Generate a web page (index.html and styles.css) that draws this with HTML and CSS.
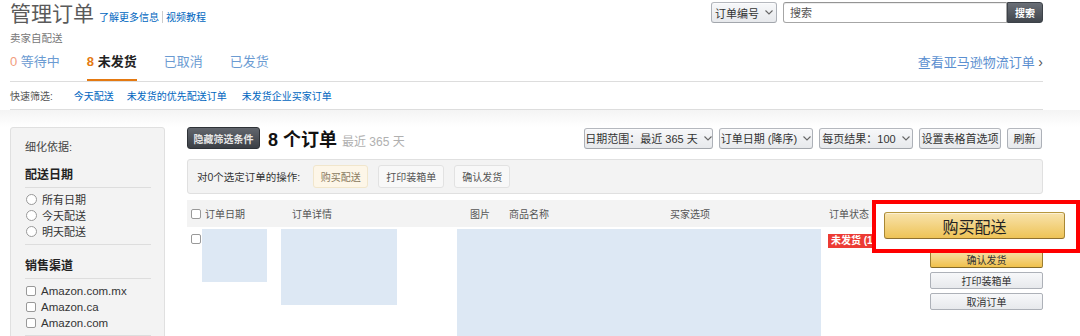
FILE: index.html
```html
<!DOCTYPE html>
<html lang="zh-CN">
<head>
    <meta charset="UTF-8">
    <title>管理订单</title>
    <link rel="stylesheet" href="styles.css">
</head>
<body>

<div class="page">
    <!-- 标题和搜索 -->
    <div class="top">
        <div class="title-wrap">
            <h1>管理订单</h1>
            <div class="help-links">
                <a href="#">了解更多信息</a><span class="sep"></span><a href="#">视频教程</a>
            </div>
        </div>
        <div class="search">
            <button class="btn select-btn">订单编号 <svg class="chev" width="8" height="5" viewBox="0 0 8 5"><polyline points="0.5,0.5 4,4 7.5,0.5" fill="none" stroke="#666" stroke-width="1.1"/></svg></button>
            <input class="search-input" type="text" placeholder="搜索">
            <button class="search-btn">搜索</button>
        </div>
    </div>

    <div class="seller-type">卖家自配送</div>

    <div class="tabs">
        <a class="tab" href="#"><span class="num-pending">0</span> 等待中</a>
        <a class="tab active" href="#"><span class="num-active">8</span> 未发货</a>
        <a class="tab" href="#">已取消</a>
        <a class="tab" href="#">已发货</a>
        <a class="tab fba-link" href="#">查看亚马逊物流订单 <span class="arrow">›</span></a>
    </div>

    <div class="quick-filter">
        <span class="qf-label">快速筛选:</span>
        <a href="#">今天配送</a>
        <a href="#">未发货的优先配送订单</a>
        <a href="#">未发货企业买家订单</a>
    </div>
    <div class="fade"></div>

    <div class="content">
        <!-- 左侧筛选 -->
        <div class="sidebar">
            <div class="refine">细化依据:</div>

            <div class="side-title">配送日期</div>
            <div class="side-list">
                <label class="opt"><span class="radio"></span>所有日期</label>
                <label class="opt"><span class="radio"></span>今天配送</label>
                <label class="opt"><span class="radio"></span>明天配送</label>
            </div>

            <div class="side-title">销售渠道</div>
            <div class="side-list">
                <label class="opt latin"><span class="check"></span>Amazon.com.mx</label>
                <label class="opt latin"><span class="check"></span>Amazon.ca</label>
                <label class="opt latin"><span class="check"></span>Amazon.com</label>
            </div>
        </div>

        <!-- 订单列表 -->
        <div class="main">
            <div class="toolbar">
                <button class="dark-btn">隐藏筛选条件</button>
                <span class="count">8 个订单</span>
                <span class="range">最近 365 天</span>
                <div class="controls">
                    <button class="btn w-range">日期范围：最近 365 天 <svg class="chev" width="8" height="5" viewBox="0 0 8 5"><polyline points="0.5,0.5 4,4 7.5,0.5" fill="none" stroke="#666" stroke-width="1.1"/></svg></button>
                    <button class="btn w-sort">订单日期 (降序) <svg class="chev" width="8" height="5" viewBox="0 0 8 5"><polyline points="0.5,0.5 4,4 7.5,0.5" fill="none" stroke="#666" stroke-width="1.1"/></svg></button>
                    <button class="btn w-page">每页结果：100 <svg class="chev" width="8" height="5" viewBox="0 0 8 5"><polyline points="0.5,0.5 4,4 7.5,0.5" fill="none" stroke="#666" stroke-width="1.1"/></svg></button>
                    <button class="btn w-pref">设置表格首选项</button>
                    <button class="btn w-refresh">刷新</button>
                </div>
            </div>

            <div class="action-bar">
                <span class="action-label">对0个选定订单的操作:</span>
                <button class="light-btn buy">购买配送</button>
                <button class="light-btn">打印装箱单</button>
                <button class="light-btn">确认发货</button>
            </div>

            <div class="orders">
                <div class="thead">
                    <span class="check"></span>
                    <span class="th c-date">订单日期</span>
                    <span class="th c-detail">订单详情</span>
                    <span class="th c-img">图片</span>
                    <span class="th c-name">商品名称</span>
                    <span class="th c-buyer">买家选项</span>
                    <span class="th c-status">订单状态</span>
                </div>

                <div class="row">
                    <span class="check row-check"></span>
                    <div class="blur b-date"></div>
                    <div class="blur b-detail"></div>
                    <div class="blur b-product"></div>
                    <div class="status"><span class="badge">未发货 (1)</span></div>
                    <div class="row-actions">
                        <button class="small-btn yellow">确认发货</button>
                        <button class="small-btn">打印装箱单</button>
                        <button class="small-btn">取消订单</button>
                    </div>
                </div>

                <!-- 标注框 -->
                <div class="callout">
                    <button class="big-buy">购买配送</button>
                </div>
            </div>
        </div>
    </div>
</div>

</body>
</html>
```

FILE: styles.css
```css
body {
    margin: 0;
    background: #fff;
    font-family: "Liberation Sans", "Noto Sans CJK SC", sans-serif;
    font-size: 12px;
    color: #333;
    overflow: hidden;
}
a {
    text-decoration: none;
}
button {
    font-family: inherit;
}
.page {
    width: 1033px;
    padding-left: 10px;
}

/* 顶部 */
.top {
    display: flex;
    justify-content: space-between;
    height: 30px;
}
.title-wrap {
    display: flex;
    align-items: baseline;
}
h1 {
    margin: 0;
    font-size: 21px;
    line-height: 28px;
    font-weight: normal;
    color: #5a5a5a;
}
.help-links {
    margin-left: 5px;
    font-size: 10px;
}
.help-links a {
    color: #0066c0;
}
.sep {
    display: inline-block;
    width: 1px;
    height: 12px;
    background: #ccc;
    margin: 0 3px -2px;
}
.search {
    display: flex;
    margin-top: 2px;
    height: 21px;
}
.btn {
    display: inline-flex;
    align-items: center;
    justify-content: center;
    gap: 6px;
    height: 100%;
    padding: 0;
    font-size: 11px;
    color: #333;
    background: linear-gradient(#f7f8fa, #e7e9ec);
    border: 1px solid #adb1b8;
    border-color: #b5b8be #adb1b8 #a2a6ac;
    border-radius: 3px;
    box-shadow: 0 1px 0 rgba(255, 255, 255, 0.6) inset;
}
.chev {
    display: block;
}
.select-btn {
    width: 66px;
    margin-right: 6px;
}
.search-input {
    width: 224px;
    box-sizing: border-box;
    height: 21px;
    margin: 0;
    padding: 0 6px;
    border: 1px solid #a6a6a6;
    border-top-color: #949494;
    border-radius: 3px 0 0 3px;
    box-shadow: 0 1px 0 rgba(0, 0, 0, 0.07) inset;
    font-family: inherit;
    font-size: 11px;
}
.search-input::placeholder {
    color: #555;
}
.search-btn {
    width: 36px;
    height: 21px;
    padding: 0;
    border: 1px solid #3d4249;
    border-radius: 0 3px 3px 0;
    background: linear-gradient(#6a6f77, #41464d);
    color: #fff;
    font-size: 10px;
    font-weight: bold;
}

.seller-type {
    font-size: 10.5px;
    line-height: 16px;
    color: #777;
}

/* 标签页 */
.tabs {
    display: flex;
    gap: 27px;
    border-bottom: 1px solid #ddd;
}
.tab {
    padding: 6px 0;
    line-height: 20px;
    font-size: 13px;
    color: #6b9bd2;
    border-bottom: 2px solid transparent;
}
.num-pending {
    color: #f29d7e;
}
.tab.active {
    color: #222;
    font-weight: bold;
    border-bottom-color: #e47911;
}
.num-active {
    color: #e47911;
}
.fba-link {
    margin-left: auto;
    font-size: 13px;
    color: #5b8fd0;
}
.arrow {
    color: #555;
    font-size: 14px;
}

.quick-filter {
    display: flex;
    align-items: center;
    gap: 13px;
    height: 27px;
    font-size: 10px;
    border-bottom: 1px solid #ddd;
}
.qf-label {
    color: #555;
    margin-right: 8px;
}
.quick-filter a {
    color: #0066c0;
}
.quick-filter a:last-child {
    margin-left: 2px;
}
.fade {
    height: 17px;
    margin-left: -10px;
    width: 1080px;
    background: linear-gradient(#f4f4f4, #fff);
}

/* 内容区 */
.content {
    display: flex;
    gap: 22px;
}
.sidebar {
    width: 126px;
    min-height: 240px;
    padding: 12px 13px 0 14px;
    background: #f3f3f3;
    border: 1px solid #e0e0e0;
    border-radius: 3px;
    flex-shrink: 0;
}
.refine {
    font-size: 11px;
    line-height: 14px;
    color: #444;
}
.side-title {
    margin-top: 14px;
    padding-bottom: 5px;
    line-height: 14px;
    font-size: 12px;
    font-weight: bold;
    color: #222;
    border-bottom: 1px solid #ddd;
}
.side-title + .side-list {
    padding: 3px 0 5px;
}
.side-list {
    border-bottom: 1px solid #ddd;
}
.side-list:last-child {
    padding: 4px 0 4px;
}
.opt {
    display: flex;
    align-items: center;
    height: 16px;
    font-size: 11px;
    color: #333;
}
.opt.latin {
    font-size: 11.5px;
}
.radio {
    width: 9px;
    height: 9px;
    border: 1px solid #999;
    border-radius: 50%;
    background: #fff;
    margin: 0 5px 0 1px;
}
.check {
    display: inline-block;
    width: 8px;
    height: 8px;
    border: 1px solid #999;
    border-radius: 2px;
    background: #fff;
    margin: 0 5px 0 1px;
    flex-shrink: 0;
}

.main {
    flex: 1;
}
.toolbar {
    display: flex;
    align-items: center;
    height: 22px;
}
.dark-btn {
    width: 73px;
    height: 22px;
    padding: 0;
    font-size: 10px;
    font-weight: bold;
    color: #e6e6e6;
    background: linear-gradient(#62666d, #3b3f45);
    border: 1px solid #2e3237;
    border-radius: 3px;
}
.count {
    margin-left: 8px;
    font-size: 18px;
    font-weight: bold;
    color: #111;
}
.range {
    margin-left: 5px;
    margin-top: 4px;
    font-size: 12px;
    color: #b0b0b0;
}
.controls {
    display: flex;
    gap: 6px;
    height: 21px;
    margin-left: auto;
    margin-right: 1px;
}
.w-range { width: 129px; }
.w-sort { width: 94px; }
.w-page { width: 94px; }
.w-pref { width: 82px; }
.w-refresh { width: 35px; }

.action-bar {
    display: flex;
    align-items: center;
    gap: 10px;
    height: 33px;
    margin-top: 10px;
    padding-left: 9px;
    background: #f3f3f3;
    border: 1px solid #e0e0e0;
    border-radius: 3px;
}
.action-label {
    font-size: 10.5px;
    color: #333;
    white-space: nowrap;
    margin-right: 3px;
}
.light-btn {
    height: 23px;
    padding: 0 7px;
    font-size: 10px;
    color: #555;
    background: #f8f8f8;
    border: 1px solid #e2e2e2;
    border-radius: 3px;
}
.light-btn.buy {
    width: 55px;
    padding: 0;
    background: #fdf6e8;
    border-color: #f1e6cc;
    color: #8a7a60;
}

/* 订单表 */
.orders {
    position: relative;
    margin-top: 6px;
}
.thead {
    display: flex;
    align-items: center;
    height: 27px;
    background: #f3f3f3;
    font-size: 10px;
    color: #555;
}
.thead .check {
    margin-left: 4px;
    margin-right: 4px;
}
.th {
    flex-shrink: 0;
}
.c-date { width: 87px; }
.c-detail { width: 178px; }
.c-img { width: 39px; }
.c-name { width: 161px; }
.c-buyer { width: 159px; }
.c-status { width: 60px; }

.row {
    display: flex;
    align-items: flex-start;
    margin-top: 2px;
}
.row-check {
    margin: 5px 0 0 4px;
}
.blur {
    background: #dde8f4;
    flex-shrink: 0;
}
.b-date {
    width: 65px;
    height: 53px;
    margin-left: 1px;
}
.b-detail {
    width: 116px;
    height: 76px;
    margin-left: 14px;
}
.b-product {
    width: 364px;
    height: 110px;
    margin-left: 60px;
}
.status {
    margin: 4px 0 0 7px;
}
.badge {
    display: inline-block;
    padding: 0 4px 0 3px;
    line-height: 14px;
    font-size: 10px;
    font-weight: bold;
    color: #fff;
    background: #ec3b34;
}
.row-actions {
    display: flex;
    flex-direction: column;
    gap: 4px;
    width: 113px;
    margin: 22px 0 0 auto;
}
.small-btn {
    height: 17px;
    padding: 0;
    font-size: 10px;
    color: #333;
    background: linear-gradient(#f7f8fa, #e7e9ec);
    border: 1px solid #adb1b8;
    border-radius: 2px;
}
.small-btn.yellow {
    background: linear-gradient(#f7dfa5, #f0c14b);
    border-color: #a88734 #9c7e31 #846a29;
}

.callout {
    position: absolute;
    left: 685px;
    top: 0;
    width: 192px;
    height: 37px;
    padding: 8px 0 0 8px;
    border: 4px solid #ff0000;
    background: #fff;
}
.big-buy {
    display: block;
    width: 181px;
    height: 27px;
    padding: 0;
    font-size: 16px;
    color: #222;
    background: linear-gradient(#f8e3ad, #eec356);
    border: 1px solid #a88734;
    border-color: #b7983f #a88734 #8f7030;
    border-radius: 3px;
    box-shadow: 0 1px 0 rgba(255, 255, 255, 0.5) inset;
}
```
